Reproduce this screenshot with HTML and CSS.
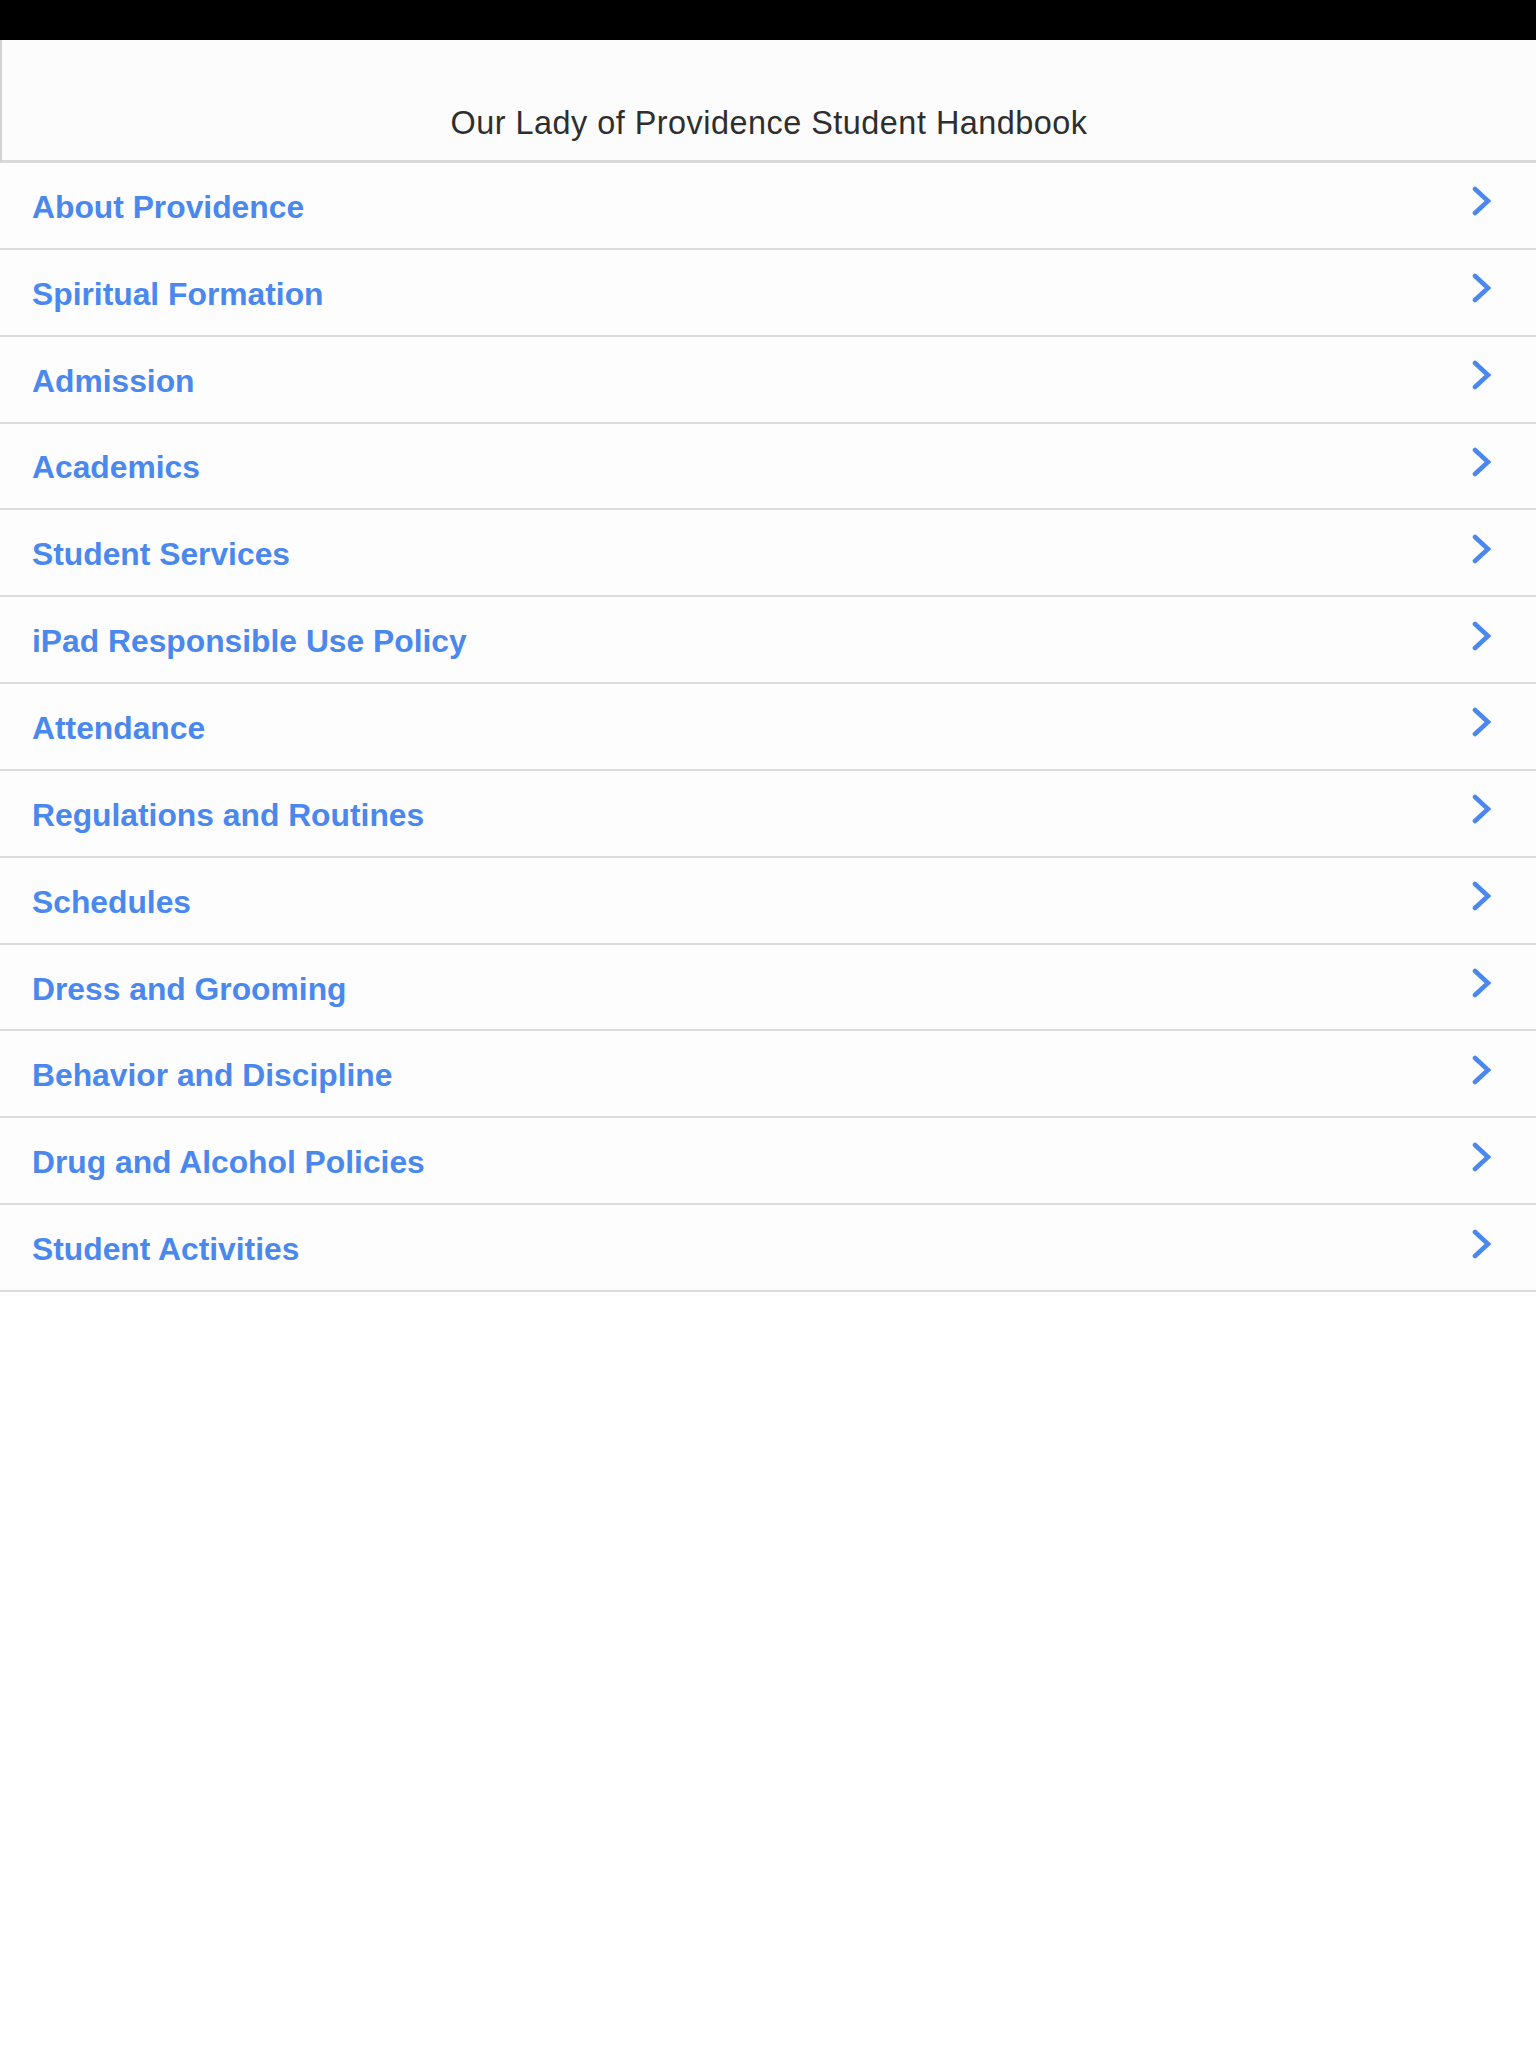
FILE: index.html
```html
<!DOCTYPE html>
<html>
<head>
<meta charset="utf-8">
<link rel="stylesheet" href="styles.css">
</head>
<body>
<div class="statusbar"></div>
<header class="navbar"><h1 class="title">Our Lady of Providence Student Handbook</h1></header>
<ul class="list">
  <li class="row"><span class="label">About Providence</span><svg class="chev" width="20" height="30" viewBox="0 0 20 30"><polyline points="3,3 16,15 3,27"/></svg></li>
  <li class="row"><span class="label">Spiritual Formation</span><svg class="chev" width="20" height="30" viewBox="0 0 20 30"><polyline points="3,3 16,15 3,27"/></svg></li>
  <li class="row"><span class="label">Admission</span><svg class="chev" width="20" height="30" viewBox="0 0 20 30"><polyline points="3,3 16,15 3,27"/></svg></li>
  <li class="row"><span class="label">Academics</span><svg class="chev" width="20" height="30" viewBox="0 0 20 30"><polyline points="3,3 16,15 3,27"/></svg></li>
  <li class="row"><span class="label">Student Services</span><svg class="chev" width="20" height="30" viewBox="0 0 20 30"><polyline points="3,3 16,15 3,27"/></svg></li>
  <li class="row"><span class="label">iPad Responsible Use Policy</span><svg class="chev" width="20" height="30" viewBox="0 0 20 30"><polyline points="3,3 16,15 3,27"/></svg></li>
  <li class="row"><span class="label">Attendance</span><svg class="chev" width="20" height="30" viewBox="0 0 20 30"><polyline points="3,3 16,15 3,27"/></svg></li>
  <li class="row"><span class="label">Regulations and Routines</span><svg class="chev" width="20" height="30" viewBox="0 0 20 30"><polyline points="3,3 16,15 3,27"/></svg></li>
  <li class="row"><span class="label">Schedules</span><svg class="chev" width="20" height="30" viewBox="0 0 20 30"><polyline points="3,3 16,15 3,27"/></svg></li>
  <li class="row"><span class="label">Dress and Grooming</span><svg class="chev" width="20" height="30" viewBox="0 0 20 30"><polyline points="3,3 16,15 3,27"/></svg></li>
  <li class="row"><span class="label">Behavior and Discipline</span><svg class="chev" width="20" height="30" viewBox="0 0 20 30"><polyline points="3,3 16,15 3,27"/></svg></li>
  <li class="row"><span class="label">Drug and Alcohol Policies</span><svg class="chev" width="20" height="30" viewBox="0 0 20 30"><polyline points="3,3 16,15 3,27"/></svg></li>
  <li class="row"><span class="label">Student Activities</span><svg class="chev" width="20" height="30" viewBox="0 0 20 30"><polyline points="3,3 16,15 3,27"/></svg></li>
</ul>
</body>
</html>
```
FILE: styles.css
```css
html, body {
  margin: 0;
  padding: 0;
  background: #ffffff;
  font-family: "Liberation Sans", Arial, sans-serif;
}
.statusbar {
  height: 40px;
  background: #000;
}
.navbar {
  box-sizing: border-box;
  height: 123px;
  background: #fcfcfc;
  border-left: 2px solid #d4d4d4;
  border-bottom: 3px solid #d9d9d9;
  padding-top: 65px;
  text-align: center;
}
.title {
  margin: 0;
  font-size: 32.4px;
  line-height: 36px;
  font-weight: normal;
  color: #2e2e2e;
  letter-spacing: 0.5px;
}
.list {
  list-style: none;
  margin: 0;
  padding: 0;
}
.row {
  box-sizing: border-box;
  height: 86.85px;
  border-bottom: 2px solid #dcdcdc;
  background: #fdfdfd;
  display: flex;
  align-items: center;
  justify-content: space-between;
  padding: 4px 44px 0 32px;
}
.label {
  font-size: 31.8px;
  font-weight: bold;
  color: #4a88ee;
}
.chev {
  margin-bottom: 12px;
}
.chev polyline {
  fill: none;
  stroke: #4a88ee;
  stroke-width: 4.6;
  stroke-linecap: round;
  stroke-linejoin: miter;
}
```
